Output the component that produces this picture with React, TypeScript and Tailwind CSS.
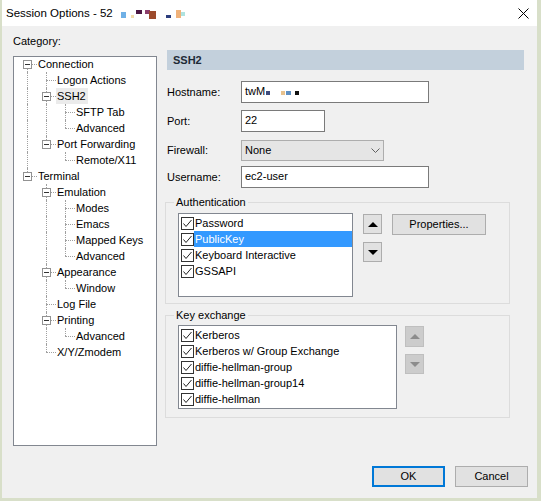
import React from "react"

type Node = {
  label: string
  anc: boolean[]
  box?: boolean
  next: boolean
  first?: boolean
  sel?: boolean
}

const tree: Node[] = [
  { label: "Connection", anc: [], box: true, next: true, first: true },
  { label: "Logon Actions", anc: [true], next: true },
  { label: "SSH2", anc: [true], box: true, next: true, sel: true },
  { label: "SFTP Tab", anc: [true, true], next: true },
  { label: "Advanced", anc: [true, true], next: false },
  { label: "Port Forwarding", anc: [true], box: true, next: false },
  { label: "Remote/X11", anc: [true, false], next: false },
  { label: "Terminal", anc: [], box: true, next: false },
  { label: "Emulation", anc: [false], box: true, next: true },
  { label: "Modes", anc: [false, true], next: true },
  { label: "Emacs", anc: [false, true], next: true },
  { label: "Mapped Keys", anc: [false, true], next: true },
  { label: "Advanced", anc: [false, true], next: false },
  { label: "Appearance", anc: [false], box: true, next: true },
  { label: "Window", anc: [false, true], next: false },
  { label: "Log File", anc: [false], next: true },
  { label: "Printing", anc: [false], box: true, next: true },
  { label: "Advanced", anc: [false, true], next: false },
  { label: "X/Y/Zmodem", anc: [false], next: false },
]

const authItems = ["Password", "PublicKey", "Keyboard Interactive", "GSSAPI"]
const kexItems = [
  "Kerberos",
  "Kerberos w/ Group Exchange",
  "diffie-hellman-group",
  "diffie-hellman-group14",
  "diffie-hellman",
]

function TitleBar() {
  return (
    <div className="h-[26px] shrink-0 bg-white flex items-center pl-[4px] pr-[8px]">
      <span className="text-[11.5px] leading-[14px] whitespace-nowrap">Session Options - 52</span>
      {/* blurred host name */}
      <svg width="74" height="26" className="ml-[1px] self-stretch">
        <rect x="7" y="12" width="5" height="6" fill="#6fb0e6" />
        <rect x="17" y="15" width="3" height="3" fill="#f2dcaa" />
        <rect x="22" y="10" width="6" height="4" fill="#4b1743" />
        <rect x="31" y="10" width="5" height="4" fill="#8b3d6c" />
        <rect x="35" y="11" width="7" height="8" fill="#9c4a2c" />
        <rect x="52" y="15" width="5" height="3" fill="#2b3d7c" />
        <rect x="62" y="10" width="5" height="8" fill="#f0b27a" />
        <rect x="67" y="12" width="4" height="4" fill="#aee3e0" />
      </svg>
      <div className="flex-1" />
      <svg width="11" height="11" viewBox="0 0 11 11">
        <path d="M0.5 0.5 L10.5 10.5 M10.5 0.5 L0.5 10.5" stroke="#000" strokeWidth="1" />
      </svg>
    </div>
  )
}

function Tree() {
  return (
    <div className="mt-[8px] h-[390px] bg-white border border-[#828790] pl-[4px]">
      <div className="-mt-px">
        {tree.map((n, i) => (
          <div key={i} className="flex h-[16px]">
            {n.anc.map((c, j) => (
              <div key={j} className="relative w-[19px] shrink-0">
                {c && <div className="absolute left-[9px] top-0 h-[16px] border-l border-dotted border-[#a0a0a0]" />}
              </div>
            ))}
            <div className="relative w-[19px] shrink-0">
              {!n.first && <div className="absolute left-[9px] top-0 h-[8px] border-l border-dotted border-[#a0a0a0]" />}
              {n.next && <div className="absolute left-[9px] top-[8px] h-[8px] border-l border-dotted border-[#a0a0a0]" />}
              <div className="absolute left-[9px] top-[8px] w-[10px] border-t border-dotted border-[#a0a0a0]" />
              {n.box && (
                <div className="absolute left-[5px] top-[4px] w-[9px] h-[9px] border border-[#929292] bg-white flex items-center justify-center">
                  <div className="w-[5px] h-px bg-[#333]" />
                </div>
              )}
            </div>
            <span className={`leading-[16px] pl-[1px] pr-[2px] whitespace-nowrap ${n.sel ? "bg-[#ebebeb]" : ""}`}>
              {n.label}
            </span>
          </div>
        ))}
      </div>
    </div>
  )
}

function CheckBox() {
  return (
    <div className="w-[13px] h-[13px] shrink-0 border border-[#333] bg-white">
      <svg width="11" height="11" viewBox="0 0 11 11">
        <polyline points="1.5,5.5 4,8.5 9.5,2" fill="none" stroke="#222" strokeWidth="1" />
      </svg>
    </div>
  )
}

function CheckList({ items, width, selected }: { items: string[]; width: string; selected?: number }) {
  return (
    <div className={`${width} h-[84px] shrink-0 bg-white border border-[#828790] pl-[2px] pt-[1px]`}>
      {items.map((t, i) => (
        <div key={t} className="flex items-center h-[16px]">
          <CheckBox />
          <span
            className={`flex-1 h-full leading-[16px] pl-[1px] whitespace-nowrap ${
              i === selected ? "bg-[#3399ff] text-white" : ""
            }`}
          >
            {t}
          </span>
        </div>
      ))}
    </div>
  )
}

function ArrowBtn({ up, disabled, className }: { up?: boolean; disabled?: boolean; className: string }) {
  return (
    <div
      className={`w-[19px] flex items-center justify-center border ${
        disabled ? "bg-[#cccccc] border-[#bfbfbf]" : "bg-[#e1e1e1] border-[#adadad]"
      } ${className}`}
    >
      <svg width="10" height="5" viewBox="0 0 10 5">
        <polygon
          points={up ? "0,5 5,0 10,5" : "0,0 5,5 10,0"}
          fill={disabled ? "#8c8c8c" : "#000"}
        />
      </svg>
    </div>
  )
}

export default function App() {
  return (
    <div className="w-[541px] h-[501px] flex flex-col bg-[#f0f0f0] border-l-2 border-r-4 border-b-[3px] border-[#d8dfc9] font-['Liberation_Sans',Arial,sans-serif] text-[11px] leading-[13px] text-black select-none">
      <TitleBar />

      <div className="flex-1 flex flex-col pl-[11px] pr-[9px] pb-[11px]">
        <div className="flex gap-[8px]">
          {/* Category tree */}
          <div className="w-[144px] shrink-0 pt-[8px]">
            <div className="leading-[14px]">Category:</div>
            <Tree />
          </div>

          {/* SSH2 page */}
          <div className="flex-1 mr-[4px] pt-[24px] flex flex-col">
            <div className="ml-[2px] h-[20px] bg-[#c3d0dc] flex items-center pl-[6px] font-bold text-[#1e2a36]">
              SSH2
            </div>

            <div className="ml-[2px] mt-[11px] flex items-center">
              <div className="w-[74px]">Hostname:</div>
              <div className="w-[188px] h-[22px] border border-[#7a7a7a] bg-white pl-[3px] pt-[3px] flex items-start">
                <span>twM</span>
                <svg width="40" height="13">
                  <rect x="1" y="6" width="4" height="4" fill="#3c4a7c" />
                  <rect x="16" y="6" width="4" height="4" fill="#e8c28e" />
                  <rect x="21" y="6" width="5" height="4" fill="#5e8fc2" />
                  <rect x="30" y="6" width="4" height="4" fill="#111" />
                </svg>
              </div>
            </div>

            <div className="ml-[2px] mt-[7px] flex items-center">
              <div className="w-[74px]">Port:</div>
              <div className="w-[84px] h-[22px] border border-[#7a7a7a] bg-white pl-[3px] pt-[3px]">22</div>
            </div>

            <div className="ml-[2px] mt-[8px] flex items-center">
              <div className="w-[74px]">Firewall:</div>
              <div className="w-[143px] h-[21px] border border-[#adadad] bg-[#e5e5e5] flex items-center justify-between pl-[3px] pr-[3px]">
                <span>None</span>
                <svg width="9" height="5" viewBox="0 0 9 5">
                  <polyline points="0.5,0.5 4.5,4.5 8.5,0.5" fill="none" stroke="#606060" strokeWidth="1" />
                </svg>
              </div>
            </div>

            <div className="ml-[2px] mt-[5px] flex items-center">
              <div className="w-[74px]">Username:</div>
              <div className="w-[188px] h-[22px] border border-[#7a7a7a] bg-white pl-[3px] pt-[3px]">ec2-user</div>
            </div>

            {/* Authentication */}
            <fieldset className="mt-[7px] w-[345px] border border-[#dcdcdc] pl-[12px] pt-[4px] pb-[6px]">
              <legend className="-ml-[4px] px-[2px] leading-[14px]">Authentication</legend>
              <div className="flex items-start">
                <CheckList items={authItems} width="w-[175px]" selected={1} />
                <div className="ml-[10px] flex flex-col">
                  <ArrowBtn up className="mt-[1px] h-[20px]" />
                  <ArrowBtn className="mt-[8px] h-[20px]" />
                </div>
                <div className="ml-[10px] mt-[1px] w-[94px] h-[21px] border border-[#adadad] bg-[#e1e1e1] flex items-center justify-center">
                  Properties...
                </div>
              </div>
            </fieldset>

            {/* Key exchange */}
            <fieldset className="mt-[4px] w-[345px] border border-[#dcdcdc] pl-[12px] pt-[3px] pb-[8px]">
              <legend className="-ml-[4px] px-[2px] leading-[14px]">Key exchange</legend>
              <div className="flex items-start">
                <CheckList items={kexItems} width="w-[219px]" />
                <div className="ml-[8px] flex flex-col">
                  <ArrowBtn up disabled className="mt-[1px] h-[21px]" />
                  <ArrowBtn disabled className="mt-[7px] h-[20px]" />
                </div>
              </div>
            </fieldset>
          </div>
        </div>

        <div className="mt-auto flex justify-end gap-[10px]">
          <div className="w-[73px] h-[21px] border-2 border-[#0078d7] bg-[#e1e1e1] flex items-center justify-center">
            OK
          </div>
          <div className="w-[73px] h-[21px] border border-[#adadad] bg-[#e1e1e1] flex items-center justify-center">
            Cancel
          </div>
        </div>
      </div>
    </div>
  )
}
